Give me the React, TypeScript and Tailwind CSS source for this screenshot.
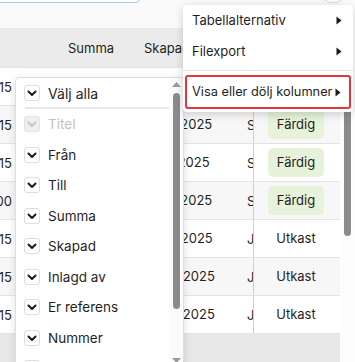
import React from "react";

const ROWS: ReadonlyArray<{ left: string; date: string; who: string; status: "done" | "draft" }> = [
  { left: "1 215", date: "12.03.2025", who: "S", status: "done" },
  { left: "1 215", date: "12.03.2025", who: "S", status: "done" },
  { left: "1 215", date: "11.03.2025", who: "S", status: "done" },
  { left: "1 200", date: "10.03.2025", who: "S", status: "done" },
  { left: "1 215", date: "07.03.2025", who: "J", status: "draft" },
  { left: "1 215", date: "06.03.2025", who: "J", status: "draft" },
  { left: "1 215", date: "05.03.2025", who: "J", status: "draft" },
];

const COLUMNS: ReadonlyArray<{ label: string; checked: boolean; disabled?: boolean }> = [
  { label: "Titel", checked: true, disabled: true },
  { label: "Från", checked: true },
  { label: "Till", checked: true },
  { label: "Summa", checked: true },
  { label: "Skapad", checked: true },
  { label: "Inlagd av", checked: true },
  { label: "Er referens", checked: true },
  { label: "Nummer", checked: true },
  { label: "Status", checked: true },
];

function Check({ disabled }: { disabled?: boolean }) {
  return (
    <span
      className={
        "flex h-[16px] w-[16px] shrink-0 items-center justify-center rounded-[3px] border " +
        (disabled ? "border-[#e2e2e2] bg-[#efefef]" : "border-[#dcdcdc] bg-white")
      }
    >
      <svg width="10" height="8" viewBox="0 0 10 8" fill="none">
        <path
          d="M1.5 2.5 L5 6 L8.5 2.5"
          stroke={disabled ? "#c4c4c4" : "#1a1a1a"}
          strokeWidth="2"
          strokeLinecap="round"
          strokeLinejoin="round"
        />
      </svg>
    </span>
  );
}

function Caret() {
  return (
    <svg width="6" height="9" viewBox="0 0 6 9" className="shrink-0">
      <path d="M0.5 0.5 L5.5 4.5 L0.5 8.5 Z" fill="#1a1a1a" />
    </svg>
  );
}

export default function App() {
  return (
    <div
      className="relative h-[362px] w-[355px] overflow-hidden bg-white text-[#1f1f1f]"
      style={{ fontFamily: "Inter, 'Noto Sans', sans-serif" }}
    >
      <div className="flex">
        <div className="w-[340px]">
          {/* top bar */}
          <div className="relative h-[28px] bg-[#fafafa]">
            <div className="absolute left-[-10px] top-[-20px] h-[23px] w-[151px] rounded-[6px] border border-[#a9c7ee] bg-white" />
            <div className="absolute left-[320px] top-[-20px] h-[23px] w-[26px] rounded-full border border-[#d8d8d8] bg-white" />
          </div>
          {/* header */}
          <div className="flex h-[39px] items-center bg-[#ebebeb] pt-[2px] text-[13px]">
            <div className="w-[60px]" />
            <div className="w-[76px] pl-[8px]">Summa</div>
            <div className="w-[103px] pl-[8px]">Skapad</div>
          </div>
          {/* rows */}
          {ROWS.map((row, i) => (
            <div
              key={i}
              className={
                "flex h-[38px] items-center border-t border-[#e4e4e4] text-[13px] " +
                (i % 2 === 1 ? "bg-[#f7f7f7]" : "bg-white")
              }
            >
              <div className="flex w-[12px] justify-end overflow-hidden whitespace-nowrap pt-[2px]">{row.left}</div>
              <div className="w-[3px] self-stretch" />
              <div className="w-[45px]" />
              <div className="w-[76px]" />
              <div className="w-[103px] pl-[8px] whitespace-nowrap">{row.date}</div>
              <div className="w-[15px] self-stretch overflow-hidden border-r border-[#cfcfcf] pl-[8px] leading-[38px]">
                {row.who}
              </div>
              <div className="flex w-[84px] justify-center">
                {row.status === "done" ? (
                  <span className="rounded-[5px] bg-[#e6f2da] px-[9px] py-[5px]">Färdig</span>
                ) : (
                  <span className="px-[9px] py-[5px]">Utkast</span>
                )}
              </div>
            </div>
          ))}
          <div className="h-[40px] border-t border-[#e4e4e4] bg-[#e8e8e8]" />
        </div>
        {/* page scrollbar */}
        <div className="flex w-[15px] justify-center bg-[#fdfdfd] pt-[60px]">
          <div className="h-[176px] w-[7px] rounded-full bg-[#8b8b8b]" />
        </div>
      </div>

      {/* column chooser submenu */}
      <div className="absolute left-[15px] top-[77px] flex h-[300px] w-[169px] rounded-tl-[4px] border border-[#dedede] bg-white shadow-[0_2px_8px_rgba(0,0,0,0.12)]">
        <div className="flex-1">
          <div className="flex h-[29px] items-center gap-[8px] pl-[8px] pt-[1px] text-[14px]">
            <Check />
            <span>Välj alla</span>
          </div>
          <div className="ml-[9px] h-[2px] bg-[#e8e8e8]" />
          <div>
            {COLUMNS.map((col) => (
              <div key={col.label} className="flex h-[30.5px] items-center gap-[8px] pl-[8px] text-[13.5px]">
                <Check disabled={col.disabled} />
                <span className={col.disabled ? "text-[#c2c2c2]" : ""}>{col.label}</span>
              </div>
            ))}
          </div>
        </div>
        <div className="flex w-[14px] flex-col items-center bg-[#fbfbfb] pt-[4px]">
          <svg width="9" height="5" viewBox="0 0 9 5">
            <path d="M0 5 L4.5 0 L9 5 Z" fill="#9a9a9a" />
          </svg>
          <div className="mt-[6px] h-[216px] w-[7px] rounded-full bg-[#8b8b8b]" />
          <div className="mt-[49px]">
            <svg width="9" height="5" viewBox="0 0 9 5">
              <path d="M0 0 L4.5 5 L9 0 Z" fill="#9a9a9a" />
            </svg>
          </div>
        </div>
      </div>

      {/* table menu */}
      <div className="absolute left-[183px] top-[5px] w-[170px] rounded-[4px] bg-white text-[13px] shadow-[0_2px_10px_rgba(0,0,0,0.18)]">
        <div className="flex h-[31px] items-center justify-between pl-[9px] pr-[11px]">
          <span>Tabellalternativ</span>
          <Caret />
        </div>
        <div className="flex h-[31px] items-center justify-between pl-[9px] pr-[11px]">
          <span>Filexport</span>
          <Caret />
        </div>
        <div className="mt-[3px] mb-[4px] h-px bg-[#e4e4e4]" />
        <div className="mx-[2px] mb-[3px] flex h-[34px] items-center justify-between rounded-[3px] border-2 border-[#e3363a] pl-[5px] pr-[8px]">
          <span className="text-[12.8px]">Visa eller dölj kolumner</span>
          <Caret />
        </div>
      </div>
    </div>
  );
}
